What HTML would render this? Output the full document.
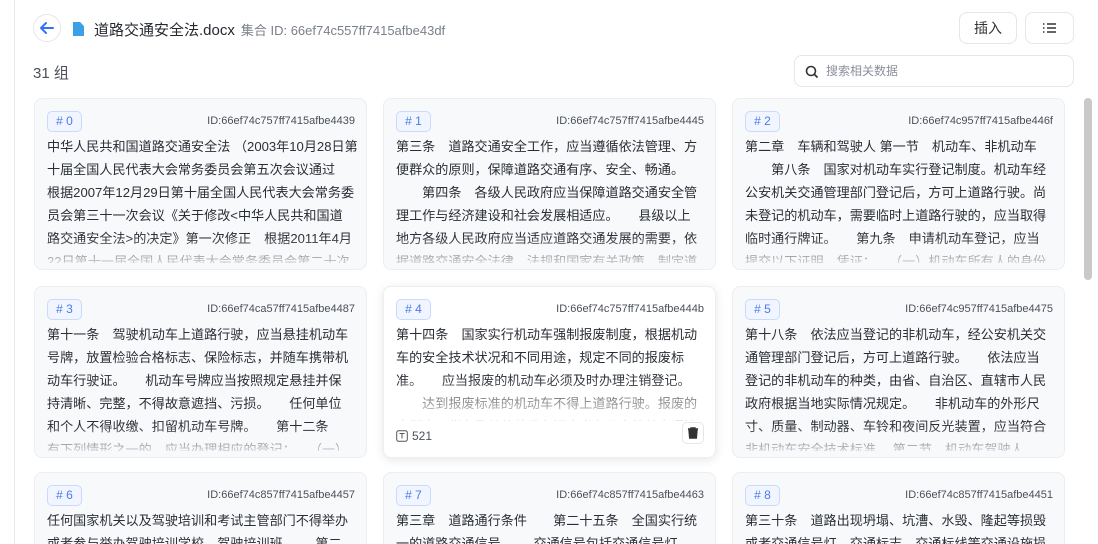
<!DOCTYPE html>
<html style="width:1098px;height:544px;overflow:hidden"><head><meta charset="utf-8"><style>
*{box-sizing:border-box;margin:0;padding:0}
body{width:1098px;height:544px;overflow:hidden;background:#fff;font-family:"Liberation Sans","Noto Sans CJK SC",sans-serif;color:#1f2329;position:relative}
.lb{position:absolute;left:14px;top:0;width:1px;height:544px;background:#e8eaee}
.back{position:absolute;left:33px;top:14px;width:28px;height:28px;border:1px solid #e3e6eb;border-radius:50%}
.title{position:absolute;left:73px;top:19px;font-size:15px;color:#24282f;white-space:nowrap}
.title .sub{font-size:13px;color:#7a808a;margin-left:6px}
.doc{display:inline-block;width:11px;height:14px;background:#3ca0e6;vertical-align:-1px;margin-right:10px;clip-path:polygon(0 0,65% 0,100% 30%,100% 100%,0 100%)}
.btn{position:absolute;top:12px;height:32px;border:1px solid #e3e6eb;border-radius:8px;font-size:14px;display:flex;align-items:center;justify-content:center;color:#333}
.cnt{position:absolute;left:33px;top:62px;font-size:15px;color:#4a4f57}
.search{position:absolute;left:794px;top:55px;width:280px;height:32px;border:1px solid #e3e6eb;border-radius:8px;font-size:12px;color:#8a9099;padding-left:31px;line-height:31px}
.card{position:absolute;width:333px;height:172px;background:#f8f9fb;border:1px solid #eceef2;border-radius:8px;overflow:hidden}
.card.b{height:72px;border-bottom:none;border-radius:8px 8px 0 0}
.card.h{background:#fff;box-shadow:0 2px 10px rgba(0,0,0,.1);border-color:#eee}
.tag{position:absolute;left:12px;top:12px;width:35px;height:21px;border:1px solid #c9dafc;background:#f0f5ff;border-radius:5px;color:#4b7bec;font-size:12px;text-align:center;line-height:19px}
.id{position:absolute;right:11px;top:16px;font-size:11px;color:#4a4f57}
.txt{position:absolute;left:12px;top:36px;width:315px;font-size:13.1px;line-height:23px;color:#2a2e35;white-space:nowrap;height:128px;overflow:hidden;-webkit-mask-image:linear-gradient(#000 80%,rgba(0,0,0,.2) 100%)}
.b .txt{height:36px;-webkit-mask-image:none}
.h .txt{height:98px;-webkit-mask-image:linear-gradient(#000 55%,rgba(0,0,0,.15) 100%)}
.sb{position:absolute;left:1084px;top:98px;width:8px;height:182px;background:#c9c9c9;border-radius:4px}
</style></head><body>
<div class="lb"></div>
<div class="back"><svg width="26" height="26" viewBox="0 0 26 26"><path d="M19 13H8M12 8l-5 5 5 5" stroke="#3370ff" stroke-width="2" fill="none" stroke-linecap="round" stroke-linejoin="round"/></svg></div>
<div class="title"><span class="doc"></span>道路交通安全法.docx<span class="sub">集合 ID: 66ef74c557ff7415afbe43df</span></div>
<div class="btn" style="left:959px;width:58px">插入</div>
<div class="btn" style="left:1025px;width:49px"><svg width="16" height="14" viewBox="0 0 16 14"><g stroke="#333" stroke-width="1.5"><path d="M5 3h9M5 7h9M5 11h9M1 3h1.5M1 7h1.5M1 11h1.5"/></g></svg></div>
<div class="cnt">31 组</div>
<div class="search"><svg style="position:absolute;left:10px;top:9px" width="14" height="14" viewBox="0 0 14 14"><circle cx="6" cy="6" r="4.5" stroke="#333" stroke-width="1.6" fill="none"/><path d="M9.5 9.5l3 3" stroke="#333" stroke-width="1.8"/></svg>搜索相关数据</div>

<div class="card" style="left:34px;top:98px"><div class="tag"># 0</div><div class="id">ID:66ef74c757ff7415afbe4439</div><div class="txt">中华人民共和国道路交通安全法 （2003年10月28日第<br>十届全国人民代表大会常务委员会第五次会议通过 <br>根据2007年12月29日第十届全国人民代表大会常务委<br>员会第三十一次会议《关于修改&lt;中华人民共和国道<br>路交通安全法&gt;的决定》第一次修正　根据2011年4月<br>22日第十一届全国人民代表大会常务委员会第二十次<br>会议《关于修改》</div></div>
<div class="card" style="left:383px;top:98px"><div class="tag"># 1</div><div class="id">ID:66ef74c757ff7415afbe4445</div><div class="txt">第三条　道路交通安全工作，应当遵循依法管理、方<br>便群众的原则，保障道路交通有序、安全、畅通。<br>　　第四条　各级人民政府应当保障道路交通安全管<br>理工作与经济建设和社会发展相适应。　　县级以上<br>地方各级人民政府应当适应道路交通发展的需要，依<br>据道路交通安全法律、法规和国家有关政策，制定道<br>路交通安全管理规划</div></div>
<div class="card" style="left:732px;top:98px"><div class="tag"># 2</div><div class="id">ID:66ef74c957ff7415afbe446f</div><div class="txt">第二章　车辆和驾驶人 第一节　机动车、非机动车<br>　　第八条　国家对机动车实行登记制度。机动车经<br>公安机关交通管理部门登记后，方可上道路行驶。尚<br>未登记的机动车，需要临时上道路行驶的，应当取得<br>临时通行牌证。　　第九条　申请机动车登记，应当<br>提交以下证明、凭证：　　（一）机动车所有人的身份<br>证明；</div></div>

<div class="card" style="left:34px;top:286px"><div class="tag"># 3</div><div class="id">ID:66ef74ca57ff7415afbe4487</div><div class="txt">第十一条　驾驶机动车上道路行驶，应当悬挂机动车<br>号牌，放置检验合格标志、保险标志，并随车携带机<br>动车行驶证。　　机动车号牌应当按照规定悬挂并保<br>持清晰、完整，不得故意遮挡、污损。　　任何单位<br>和个人不得收缴、扣留机动车号牌。　　第十二条　<br>有下列情形之一的，应当办理相应的登记：　　（一）<br>机动车所有权发生转移的</div></div>
<div class="card h" style="left:383px;top:286px"><div class="tag"># 4</div><div class="id">ID:66ef74c757ff7415afbe444b</div><div class="txt">第十四条　国家实行机动车强制报废制度，根据机动<br>车的安全技术状况和不同用途，规定不同的报废标<br>准。　　应当报废的机动车必须及时办理注销登记。<br>　　达到报废标准的机动车不得上道路行驶。报废的<br>大型客、货车及其他营运车辆应当在公安机关交通管</div>
<div style="position:absolute;left:12px;top:142px;font-size:12px;color:#4a4f57"><svg width="12" height="12" viewBox="0 0 12 12" style="vertical-align:-2px;margin-right:4px"><rect x=".7" y=".7" width="10.6" height="10.6" rx="2" stroke="#555" fill="none"/><path d="M3.5 3.5h5M6 3.5v5" stroke="#555"/></svg>521</div>
<div style="position:absolute;right:11px;top:135px;width:22px;height:22px;border:1px solid #e3e6eb;border-radius:5px"><svg width="20" height="20" viewBox="0 0 20 20"><path d="M6 7h8l-.7 8H6.7z M5 6h10M8 6V5h4v1" stroke="#333" stroke-width="1.4" fill="#333"/></svg></div></div>
<div class="card" style="left:732px;top:286px"><div class="tag"># 5</div><div class="id">ID:66ef74c957ff7415afbe4475</div><div class="txt">第十八条　依法应当登记的非机动车，经公安机关交<br>通管理部门登记后，方可上道路行驶。　　依法应当<br>登记的非机动车的种类，由省、自治区、直辖市人民<br>政府根据当地实际情况规定。　　非机动车的外形尺<br>寸、质量、制动器、车铃和夜间反光装置，应当符合<br>非机动车安全技术标准。 第二节　机动车驾驶人<br>第十九条</div></div>

<div class="card b" style="left:34px;top:472px"><div class="tag"># 6</div><div class="id">ID:66ef74c857ff7415afbe4457</div><div class="txt">任何国家机关以及驾驶培训和考试主管部门不得举办<br>或者参与举办驾驶培训学校、驾驶培训班。　　第二</div></div>
<div class="card b" style="left:383px;top:472px"><div class="tag"># 7</div><div class="id">ID:66ef74c857ff7415afbe4463</div><div class="txt">第三章　道路通行条件　　第二十五条　全国实行统<br>一的道路交通信号。　　交通信号包括交通信号灯、</div></div>
<div class="card b" style="left:732px;top:472px"><div class="tag"># 8</div><div class="id">ID:66ef74c857ff7415afbe4451</div><div class="txt">第三十条　道路出现坍塌、坑漕、水毁、隆起等损毁<br>或者交通信号灯、交通标志、交通标线等交通设施损</div></div>
<div class="sb"></div>
</body></html>
